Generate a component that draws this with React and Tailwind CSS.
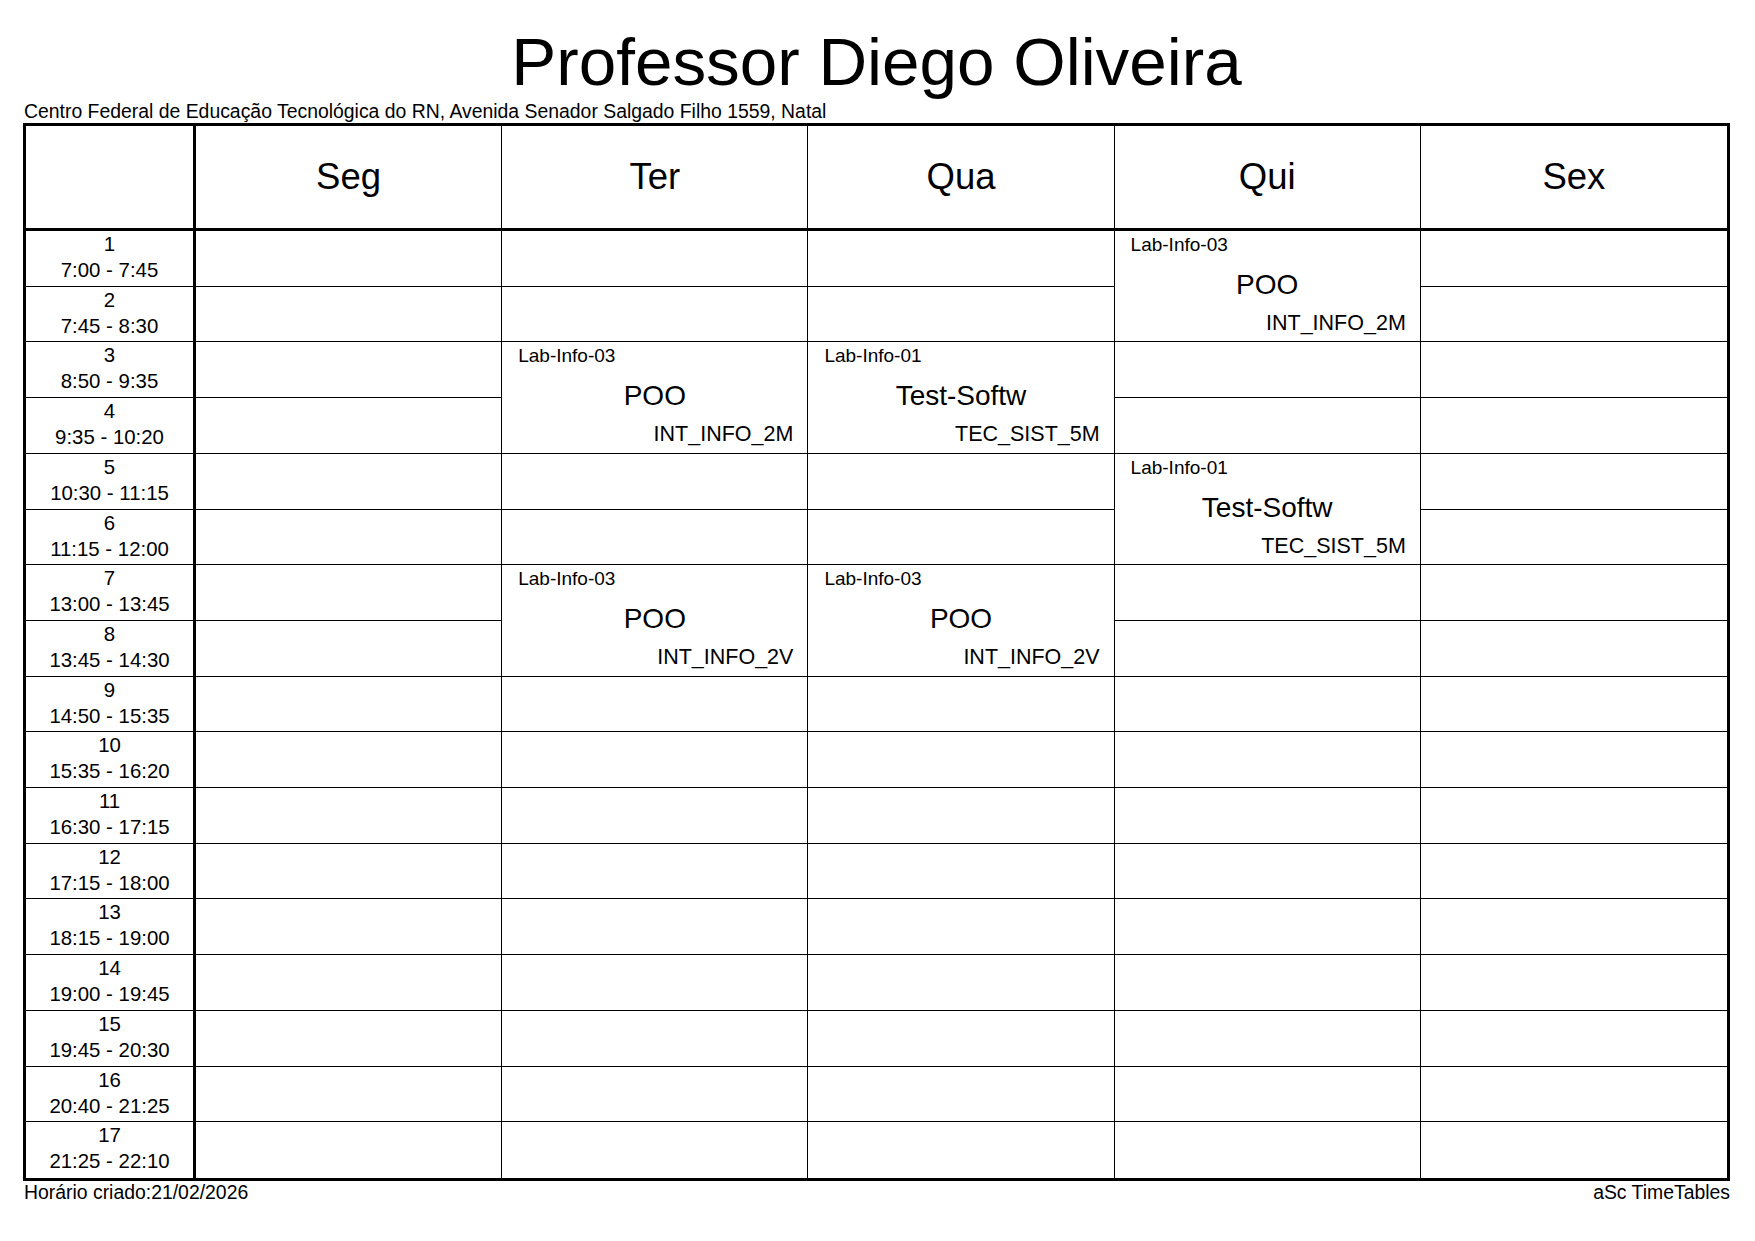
const days = ["Seg", "Ter", "Qua", "Qui", "Sex"];

const periods = [
  ["1", "7:00 - 7:45"],
  ["2", "7:45 - 8:30"],
  ["3", "8:50 - 9:35"],
  ["4", "9:35 - 10:20"],
  ["5", "10:30 - 11:15"],
  ["6", "11:15 - 12:00"],
  ["7", "13:00 - 13:45"],
  ["8", "13:45 - 14:30"],
  ["9", "14:50 - 15:35"],
  ["10", "15:35 - 16:20"],
  ["11", "16:30 - 17:15"],
  ["12", "17:15 - 18:00"],
  ["13", "18:15 - 19:00"],
  ["14", "19:00 - 19:45"],
  ["15", "19:45 - 20:30"],
  ["16", "20:40 - 21:25"],
  ["17", "21:25 - 22:10"],
];

// key = "row-day" (row index 0-based, day index 0-based), each lesson covers 2 rows
const lessons = {
  "0-3": { room: "Lab-Info-03", subject: "POO", group: "INT_INFO_2M" },
  "2-1": { room: "Lab-Info-03", subject: "POO", group: "INT_INFO_2M" },
  "2-2": { room: "Lab-Info-01", subject: "Test-Softw", group: "TEC_SIST_5M" },
  "4-3": { room: "Lab-Info-01", subject: "Test-Softw", group: "TEC_SIST_5M" },
  "6-1": { room: "Lab-Info-03", subject: "POO", group: "INT_INFO_2V" },
  "6-2": { room: "Lab-Info-03", subject: "POO", group: "INT_INFO_2V" },
};

function LessonCell({ lesson, lastCol, lastRow }) {
  return (
    <div
      className={`row-span-2 flex flex-col border-black ${lastCol ? "" : "border-r"} ${lastRow ? "" : "border-b"}`}
    >
      <div className="pt-[3px] pl-[16px] text-[19px] leading-[22px]">{lesson.room}</div>
      <div className="mt-[14px] text-center text-[28px] leading-[30px]">{lesson.subject}</div>
      <div className="mt-[11px] pr-[14px] text-right text-[21.5px] leading-[25px]">{lesson.group}</div>
    </div>
  );
}

export default function App() {
  const covered = {};
  const cells = [];

  periods.forEach(([num, time], r) => {
    const lastRow = r === periods.length - 1;
    cells.push(
      <div
        key={`t-${r}`}
        className={`flex flex-col items-center border-r-[3px] border-black text-[20.4px] leading-[26px] ${lastRow ? "" : "border-b"}`}
      >
        <span>{num}</span>
        <span>{time}</span>
      </div>
    );
    days.forEach((d, c) => {
      const key = `${r}-${c}`;
      if (covered[key]) return;
      const lastCol = c === days.length - 1;
      const lesson = lessons[key];
      if (lesson) {
        covered[`${r + 1}-${c}`] = true;
        cells.push(
          <LessonCell
            key={key}
            lesson={lesson}
            lastCol={lastCol}
            lastRow={r + 1 === periods.length - 1}
          />
        );
      } else {
        cells.push(
          <div
            key={key}
            className={`border-black ${lastCol ? "" : "border-r"} ${lastRow ? "" : "border-b"}`}
          />
        );
      }
    });
  });

  return (
    <div className="w-[1755px] h-[1241px] bg-white text-black pl-[23px] pr-[25px] pt-[23px] font-['Liberation_Sans',Arial,sans-serif]">
      <h1 className="text-center text-[67.4px] leading-[77px]">Professor Diego Oliveira</h1>
      <p className="pl-[1px] text-[19.4px] leading-[22px]">
        Centro Federal de Educação Tecnológica do RN, Avenida Senador Salgado Filho 1559, Natal
      </p>

      <div className="mt-[1px] h-[1058px] border-[3px] border-black grid grid-cols-[170px_repeat(5,minmax(0,1fr))] grid-rows-[105px_repeat(17,minmax(0,1fr))]">
        <div className="border-r-[3px] border-b-[3px] border-black" />
        {days.map((d, i) => (
          <div
            key={d}
            className={`flex items-center justify-center border-b-[3px] border-black text-[36.5px] ${i === days.length - 1 ? "" : "border-r"}`}
          >
            {d}
          </div>
        ))}
        {cells}
      </div>

      <div className="flex justify-between pl-[1px] text-[19.4px] leading-[22px]">
        <span>Horário criado:21/02/2026</span>
        <span>aSc TimeTables</span>
      </div>
    </div>
  );
}
